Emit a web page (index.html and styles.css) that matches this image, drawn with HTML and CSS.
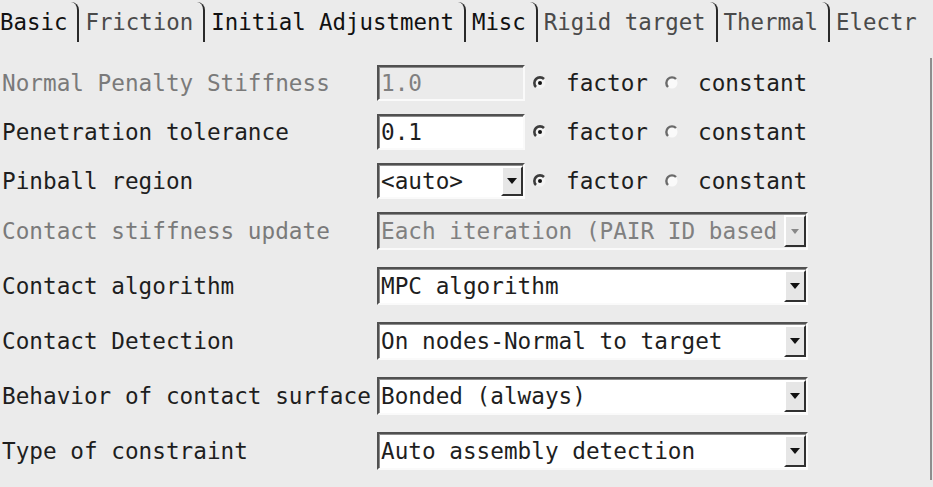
FILE: index.html
```html
<!DOCTYPE html>
<html lang="en">

<head>
    <meta charset="UTF-8">
    <meta name="viewport" content="width=device-width, initial-scale=1.0">
    <title>Contact Properties</title>
    <link rel="stylesheet" href="styles.css">
</head>

<body>
    <div class="tabs">
        <div class="tab tab-first strong">Basic</div>
        <div class="tab">Friction</div>
        <div class="tab strong">Initial Adjustment</div>
        <div class="tab strong">Misc</div>
        <div class="tab">Rigid target</div>
        <div class="tab">Thermal</div>
        <div class="tab tab-last">Electr</div>
    </div>

    <div class="panel">
        <div class="row field-row">
            <div class="label disabled">Normal Penalty Stiffness</div>
            <div class="box field is-disabled">1.0</div>
            <div class="choice">
                <svg class="radio" width="14" height="14" viewBox="0 0 14 14"><circle cx="7" cy="7" r="5.5" fill="#f4f4f4"/><path d="M3 11A5.6 5.6 0 0 1 11 3" fill="none" stroke="#3c3c3c" stroke-width="2.6"/><circle cx="7" cy="7" r="2" fill="#111"/></svg>
                <span class="choice-text">factor</span>
            </div>
            <div class="choice">
                <svg class="radio" width="14" height="14" viewBox="0 0 14 14"><circle cx="7" cy="7" r="5.5" fill="#fafafa"/><path d="M3 11A5.6 5.6 0 0 1 11 3" fill="none" stroke="#6a6a6a" stroke-width="2.4"/></svg>
                <span class="choice-text">constant</span>
            </div>
        </div>

        <div class="row field-row">
            <div class="label">Penetration tolerance</div>
            <div class="box field">0.1</div>
            <div class="choice">
                <svg class="radio" width="14" height="14" viewBox="0 0 14 14"><circle cx="7" cy="7" r="5.5" fill="#f4f4f4"/><path d="M3 11A5.6 5.6 0 0 1 11 3" fill="none" stroke="#3c3c3c" stroke-width="2.6"/><circle cx="7" cy="7" r="2" fill="#111"/></svg>
                <span class="choice-text">factor</span>
            </div>
            <div class="choice">
                <svg class="radio" width="14" height="14" viewBox="0 0 14 14"><circle cx="7" cy="7" r="5.5" fill="#fafafa"/><path d="M3 11A5.6 5.6 0 0 1 11 3" fill="none" stroke="#6a6a6a" stroke-width="2.4"/></svg>
                <span class="choice-text">constant</span>
            </div>
        </div>

        <div class="row field-row">
            <div class="label">Pinball region</div>
            <div class="box combo combo-small">
                <span class="combo-text">&lt;auto&gt;</span>
                <span class="combo-btn"><svg width="10" height="6" viewBox="0 0 10 6"><path d="M0 0h10L5 6z" fill="#111"/></svg></span>
            </div>
            <div class="choice">
                <svg class="radio" width="14" height="14" viewBox="0 0 14 14"><circle cx="7" cy="7" r="5.5" fill="#f4f4f4"/><path d="M3 11A5.6 5.6 0 0 1 11 3" fill="none" stroke="#3c3c3c" stroke-width="2.6"/><circle cx="7" cy="7" r="2" fill="#111"/></svg>
                <span class="choice-text">factor</span>
            </div>
            <div class="choice">
                <svg class="radio" width="14" height="14" viewBox="0 0 14 14"><circle cx="7" cy="7" r="5.5" fill="#fafafa"/><path d="M3 11A5.6 5.6 0 0 1 11 3" fill="none" stroke="#6a6a6a" stroke-width="2.4"/></svg>
                <span class="choice-text">constant</span>
            </div>
        </div>

        <div class="row select-row">
            <div class="label disabled">Contact stiffness update</div>
            <div class="box combo is-disabled">
                <span class="combo-text">Each iteration (PAIR ID based</span>
                <span class="combo-btn"><svg width="8" height="5" viewBox="0 0 8 5"><path d="M0 0h8L4 5z" fill="#888"/></svg></span>
            </div>
        </div>

        <div class="row select-row">
            <div class="label">Contact algorithm</div>
            <div class="box combo">
                <span class="combo-text">MPC algorithm</span>
                <span class="combo-btn"><svg width="10" height="6" viewBox="0 0 10 6"><path d="M0 0h10L5 6z" fill="#111"/></svg></span>
            </div>
        </div>

        <div class="row select-row">
            <div class="label">Contact Detection</div>
            <div class="box combo">
                <span class="combo-text">On nodes-Normal to target</span>
                <span class="combo-btn"><svg width="10" height="6" viewBox="0 0 10 6"><path d="M0 0h10L5 6z" fill="#111"/></svg></span>
            </div>
        </div>

        <div class="row select-row">
            <div class="label">Behavior of contact surface</div>
            <div class="box combo">
                <span class="combo-text">Bonded (always)</span>
                <span class="combo-btn"><svg width="10" height="6" viewBox="0 0 10 6"><path d="M0 0h10L5 6z" fill="#111"/></svg></span>
            </div>
        </div>

        <div class="row select-row">
            <div class="label">Type of constraint</div>
            <div class="box combo">
                <span class="combo-text">Auto assembly detection</span>
                <span class="combo-btn"><svg width="10" height="6" viewBox="0 0 10 6"><path d="M0 0h10L5 6z" fill="#111"/></svg></span>
            </div>
        </div>
    </div>
</body>

</html>
```

FILE: styles.css
```css
* {
    box-sizing: border-box;
}
body {
    margin: 0;
    width: 933px;
    height: 487px;
    overflow: hidden;
    background-color: #ebebeb;
    color: #1e1e1e;
    font-family: "DejaVu Sans Mono", "Liberation Mono", monospace;
    font-size: 22.7px;
}
.tabs {
    display: flex;
    height: 44px;
    white-space: nowrap;
    overflow: hidden;
}
.tab {
    display: flex;
    align-items: center;
    height: 40px;
    margin-top: 2px;
    padding: 0 10px 0 6px;
    border-right: 2px solid #2a2a2a;
    border-top-right-radius: 8px;
    color: #4a4a4a;
    font-size: 22.4px;
}
.tab.strong {
    color: #111;
}
.tab-first {
    padding-left: 0;
}
.tab-last {
    border-right: none;
}
.panel {
    height: 422px;
    margin: 14px 1px 0 0;
    padding-top: 7px;
    border-right: 2px solid #8e8e8e;
}
.row {
    display: flex;
    align-items: center;
}
.field-row {
    height: 36px;
    margin-bottom: 13px;
}
.select-row {
    height: 38px;
    margin-bottom: 17px;
}
.label {
    flex: none;
    width: 377px;
    padding-left: 2px;
    white-space: nowrap;
}
.label.disabled {
    color: #7a7a7a;
}
.box {
    height: 100%;
    border: 2px solid;
    border-color: #505050 #fafafa #fafafa #505050;
    box-shadow: inset 1px 1px 0 #8c8c8c;
    background-color: #fff;
    padding-left: 2px;
    white-space: nowrap;
}
.field {
    width: 148px;
    display: flex;
    align-items: center;
}
.box.is-disabled {
    background-color: #ebebeb;
    color: #808080;
}
.combo {
    width: 431px;
    display: flex;
    align-items: center;
}
.combo-small {
    width: 148px;
}
.combo-text {
    flex: 1;
    overflow: hidden;
}
.combo-btn {
    flex: none;
    display: flex;
    align-items: center;
    justify-content: center;
    width: 22px;
    height: calc(100% - 2px);
    border: 2px solid;
    border-color: #fff #303030 #303030 #fff;
    background-color: #e6e6e6;
}
.choice {
    display: flex;
    align-items: center;
    margin-left: 8px;
}
.choice + .choice {
    margin-left: 17px;
}
.radio {
    flex: none;
}
.choice-text {
    margin-left: 19px;
}
```
